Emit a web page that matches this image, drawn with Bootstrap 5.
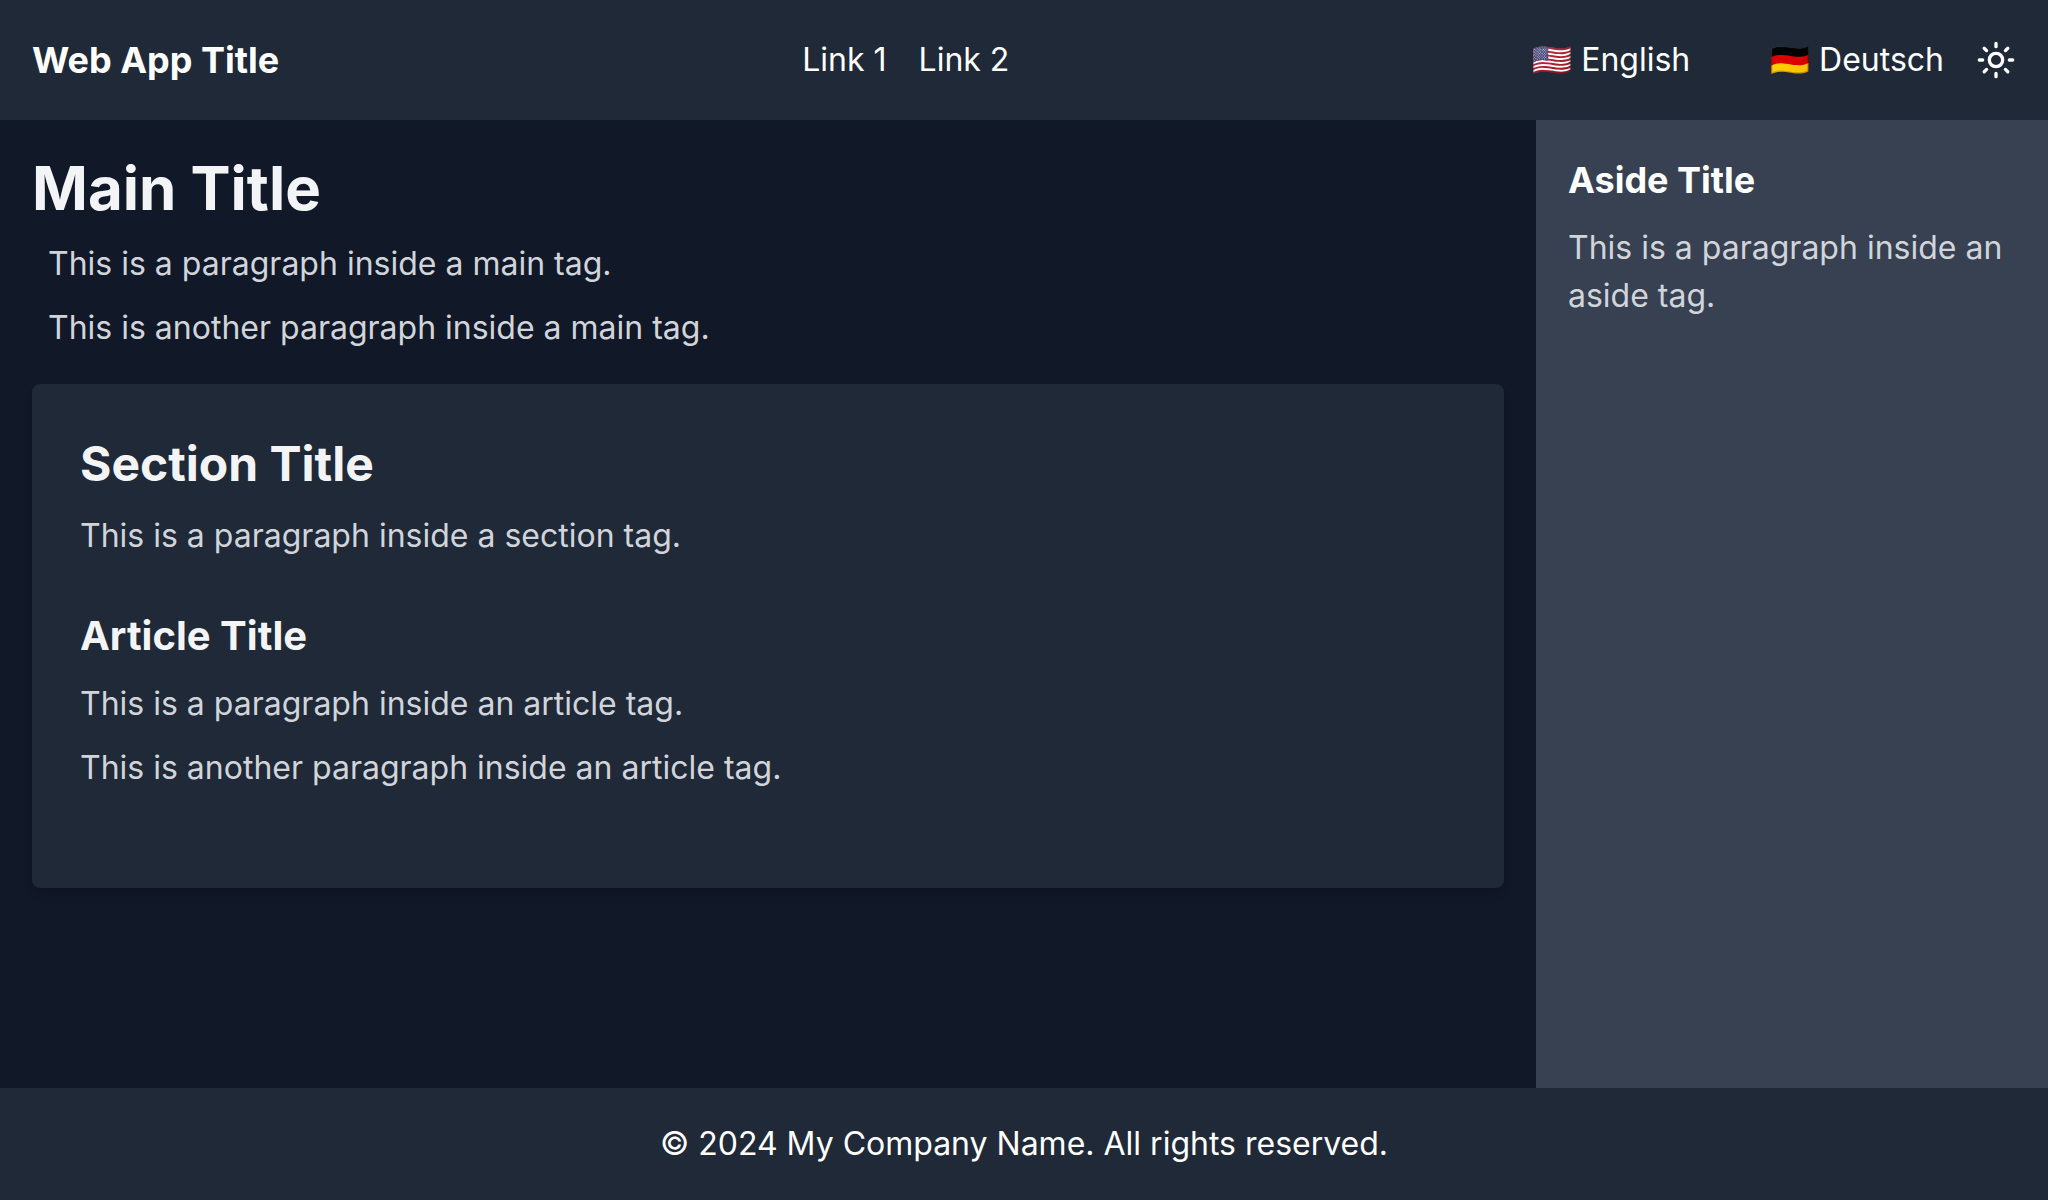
<!DOCTYPE html>
<html lang="en" data-bs-theme="dark">
<head>
<meta charset="utf-8">
<meta name="viewport" content="width=device-width, initial-scale=1">
<title>Web App Title</title>
<link href="https://cdn.jsdelivr.net/npm/bootstrap@5.3.0/dist/css/bootstrap.min.css" rel="stylesheet">
<style>
  body { font-family: Inter, "Noto Sans", "Noto Color Emoji", sans-serif; font-size: 32px; line-height: 48px; background: #111827; color: #fff; }
  a { color: #fff; text-decoration: none; }
  h1, h2, h3, h4 { font-weight: 700; margin-bottom: 16px; color: #f3f4f6; }
  p { margin-bottom: 16px; color: #d1d5db; }
  .bar { background: #1f2937; padding: 32px; }
  .brand, .aside-title { font-size: 36px; line-height: 56px; font-weight: 700; color: #fff; }
  .main-title { font-size: 60px; line-height: 72px; }
  .section-title { font-size: 48px; line-height: 64px; }
  .article-title { font-size: 40px; line-height: 56px; }
  .gap-wide { gap: 32px; }
  .languages { gap: 80px; }
  .theme-toggle { width: 40px; height: 40px; color: #fff; }
  .theme-toggle svg { width: 40px; height: 40px; }
  .page-main, .page-aside { padding: 32px; }
  .page-aside { background: #374151; }
  .intro { padding: 0 16px; }
  .panel { background: #1f2937; border-radius: 8px; padding: 48px; margin-top: 32px; box-shadow: 0 8px 12px -2px rgba(0,0,0,.1), 0 4px 8px -4px rgba(0,0,0,.1); }
  .story { padding: 32px 0; }
</style>
</head>
<body>
<div class="d-flex flex-column min-vh-100">
  <header class="bar d-flex flex-wrap justify-content-between align-items-center">
    <a class="brand" href="#">Web App Title</a>
    <nav class="d-flex gap-wide" aria-label="Main">
      <a href="#">Link 1</a>
      <a href="#">Link 2</a>
    </nav>
    <div class="d-flex align-items-center gap-wide">
      <div class="languages d-flex">
        <a href="#" lang="en">🇺🇸 English</a>
        <a href="#" lang="de">🇩🇪 Deutsch</a>
      </div>
      <button class="theme-toggle btn p-0 border-0 d-flex" type="button" aria-label="Toggle theme">
        <svg viewBox="0 0 24 24" fill="none" stroke="currentColor" stroke-width="2" stroke-linecap="round" stroke-linejoin="round" aria-hidden="true"><circle cx="12" cy="12" r="4"/><path d="M12 2v2M12 20v2M4.93 4.93l1.41 1.41M17.66 17.66l1.41 1.41M2 12h2M20 12h2M6.34 17.66l-1.41 1.41M19.07 4.93l-1.41 1.41"/></svg>
      </button>
    </div>
  </header>
  <div class="row g-0 flex-grow-1">
    <main class="page-main col-12 col-md-9">
      <h1 class="main-title">Main Title</h1>
      <div class="intro">
        <p>This is a paragraph inside a main tag.</p>
        <p>This is another paragraph inside a main tag.</p>
      </div>
      <section class="panel">
        <h2 class="section-title">Section Title</h2>
        <p>This is a paragraph inside a section tag.</p>
        <article class="story">
          <h3 class="article-title">Article Title</h3>
          <p>This is a paragraph inside an article tag.</p>
          <p>This is another paragraph inside an article tag.</p>
        </article>
      </section>
    </main>
    <aside class="page-aside col-12 col-md-3">
      <h4 class="aside-title">Aside Title</h4>
      <p>This is a paragraph inside an aside tag.</p>
    </aside>
  </div>
  <footer class="bar text-center">© 2024 My Company Name. All rights reserved.</footer>
</div>
<script src="https://cdn.jsdelivr.net/npm/bootstrap@5.3.0/dist/js/bootstrap.bundle.min.js"></script>
</body>
</html>
